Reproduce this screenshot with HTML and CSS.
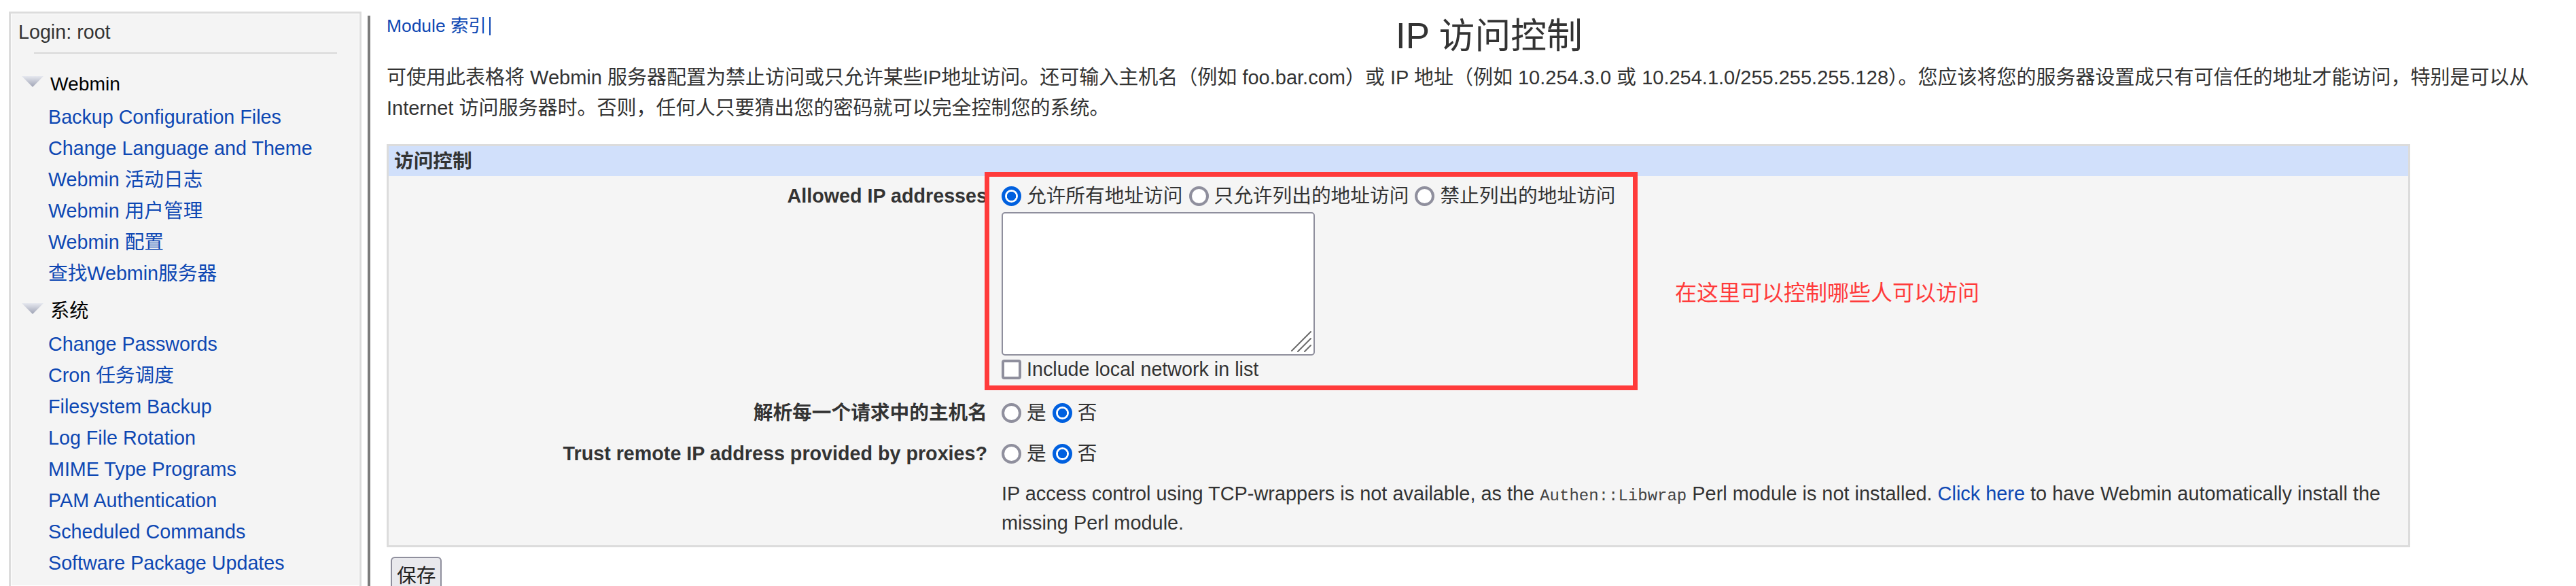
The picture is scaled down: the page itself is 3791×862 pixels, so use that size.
FILE: index.html
```html
<!DOCTYPE html>
<html lang="zh-CN">
<head>
<meta charset="utf-8">
<title>IP 访问控制</title>
<link rel="stylesheet" href="styles.css">
</head>
<body>
<div class="page">
  <aside class="side">
    <div class="panel">
      <div class="login">Login: root</div>
      <hr class="sep">
      <div class="cat">
        <svg class="tri" width="32" height="16" viewBox="0 0 32 16"><defs><linearGradient id="tg" x1="0" y1="0" x2="0" y2="1"><stop offset="0" stop-color="#e6e8ef"/><stop offset="1" stop-color="#9ea2b4"/></linearGradient></defs><polygon points="0,0 32,0 16,16" fill="url(#tg)"/></svg>
        <span>Webmin</span>
      </div>
      <ul class="links">
        <li><a href="#">Backup Configuration Files</a></li>
        <li><a href="#">Change Language and Theme</a></li>
        <li><a href="#">Webmin 活动日志</a></li>
        <li><a href="#">Webmin 用户管理</a></li>
        <li><a href="#">Webmin 配置</a></li>
        <li><a href="#">查找Webmin服务器</a></li>
      </ul>
      <div class="cat cat2">
        <svg class="tri" width="32" height="16" viewBox="0 0 32 16"><defs><linearGradient id="tg2" x1="0" y1="0" x2="0" y2="1"><stop offset="0" stop-color="#e6e8ef"/><stop offset="1" stop-color="#9ea2b4"/></linearGradient></defs><polygon points="0,0 32,0 16,16" fill="url(#tg2)"/></svg>
        <span>系统</span>
      </div>
      <ul class="links">
        <li><a href="#">Change Passwords</a></li>
        <li><a href="#">Cron 任务调度</a></li>
        <li><a href="#">Filesystem Backup</a></li>
        <li><a href="#">Log File Rotation</a></li>
        <li><a href="#">MIME Type Programs</a></li>
        <li><a href="#">PAM Authentication</a></li>
        <li><a href="#">Scheduled Commands</a></li>
        <li><a href="#">Software Package Updates</a></li>
      </ul>
    </div>
  </aside>
  <main class="main">
    <div class="topbar">
      <div class="modlinks"><a href="#">Module 索引</a><span class="caret"></span></div>
      <h1 class="title">IP 访问控制</h1>
      <div></div>
    </div>
    <p class="intro">可使用此表格将 Webmin 服务器配置为禁止访问或只允许某些IP地址访问。还可输入主机名（例如 foo.bar.com）或 IP 地址（例如 10.254.3.0 或 10.254.1.0/255.255.255.128）。您应该将您的服务器设置成只有可信任的地址才能访问，特别是可以从<br>Internet 访问服务器时。否则，任何人只要猜出您的密码就可以完全控制您的系统。</p>
    <form class="box">
      <div class="box-head">访问控制</div>
      <div class="row row1">
        <div class="lbl">Allowed IP addresses</div>
        <div class="val">
          <div class="opts">
            <label class="opt"><input type="radio" name="access" class="radio" checked>允许所有地址访问</label>
            <label class="opt"><input type="radio" name="access" class="radio">只允许列出的地址访问</label>
            <label class="opt"><input type="radio" name="access" class="radio">禁止列出的地址访问</label>
          </div>
          <div class="ta-wrap">
            <textarea class="ta"></textarea>
            <svg class="grip" width="32" height="32" viewBox="0 0 32 32"><g stroke="#6b6b6b" stroke-width="2" stroke-linecap="round"><line x1="2" y1="30" x2="30" y2="2"/><line x1="11" y1="31" x2="30" y2="12"/><line x1="21" y1="31" x2="30" y2="22"/></g></svg>
          </div>
          <label class="opt chk"><input type="checkbox" class="check">Include local network in list</label>
        </div>
      </div>
      <div class="row row2">
        <div class="lbl">解析每一个请求中的主机名</div>
        <div class="val">
          <div class="opts">
            <label class="opt"><input type="radio" name="resolve" class="radio">是</label>
            <label class="opt"><input type="radio" name="resolve" class="radio" checked>否</label>
          </div>
        </div>
      </div>
      <div class="row row3">
        <div class="lbl">Trust remote IP address provided by proxies?</div>
        <div class="val">
          <div class="opts">
            <label class="opt"><input type="radio" name="trust" class="radio">是</label>
            <label class="opt"><input type="radio" name="trust" class="radio" checked>否</label>
          </div>
        </div>
      </div>
      <div class="row row4">
        <div class="lbl"></div>
        <div class="val note">IP access control using TCP-wrappers is not available, as the <code class="mono">Authen::Libwrap</code> Perl module is not installed. <a href="#">Click here</a> to have Webmin automatically install the<br>missing Perl module.</div>
      </div>
    </form>
    <button class="save" type="button">保存</button>
  </main>
  <div class="mark"></div>
  <div class="mark-text">在这里可以控制哪些人可以访问</div>
</div>
</body>
</html>
```

FILE: styles.css
```css
html, body {
  margin: 0;
  height: 100%;
  overflow: hidden;
  background: #fff;
}
body {
  font-family: "Liberation Sans", Arial, "Noto Sans CJK SC", sans-serif;
  font-size: 28.7px;
  color: #333;
}
a {
  color: #0d47b3;
  text-decoration: none;
}
.page {
  position: relative;
  display: flex;
  height: 100vh;
}

/* left frame */
.side {
  width: 519px;
  flex: none;
  padding: 17px 9px 0 13px;
}
.panel {
  height: 100%;
  box-sizing: border-box;
  border: 3px solid #dcdcdc;
  border-bottom: 0;
  box-shadow: inset 0 0 0 1px #fff;
  background: #f4f4f4;
  padding-top: 9px;
}
.login {
  padding-left: 11px;
  line-height: 36px;
  color: #333;
}
.sep {
  border: 0;
  height: 2px;
  background: #d8d8d8;
  margin: 12px 33px 24px 34px;
}
.cat {
  display: flex;
  align-items: flex-start;
  height: 40px;
  line-height: 40px;
  color: #000;
  font-size: 28.2px;
}
.cat2 {
  margin-top: 12px;
}
.tri {
  margin: 9px 10px 0 16px;
  flex: none;
}
.links {
  list-style: none;
  margin: 6px 0 0;
  padding: 0 0 0 55px;
}
.links li {
  line-height: 46px;
  white-space: nowrap;
}

/* main frame */
.main {
  flex: 1;
  min-width: 0;
  margin-top: 23px;
  border-left: 4px solid #7c7c7c;
  padding: 0 20px 0 24px;
}
.topbar {
  display: grid;
  grid-template-columns: 1485px auto 1fr;
  align-items: start;
}
.modlinks {
  font-size: 26.4px;
  line-height: 30px;
  display: flex;
  align-items: center;
}
.caret {
  display: inline-block;
  width: 2px;
  height: 27px;
  background: #0d47b3;
  margin-left: 4px;
}
.title {
  margin: 0;
  font-size: 52.8px;
  font-weight: normal;
  line-height: 60px;
  color: #333;
  white-space: nowrap;
}
.intro {
  margin: 9px 0 0;
  font-size: 29px;
  line-height: 45px;
  white-space: nowrap;
}
.box {
  margin: 30px 0 0;
  width: 2978px;
  box-sizing: border-box;
  border: 3px solid #dcdcdc;
  background: #f5f5f5;
  padding-bottom: 1px;
}
.box-head {
  background: #d1e0fb;
  height: 44px;
  line-height: 44px;
  padding-left: 8px;
  font-weight: bold;
  color: #333;
}
.row {
  display: grid;
  grid-template-columns: 888px 1fr;
  align-items: start;
}
.row1 { padding: 11px 0 13px; }
.row2 { padding: 14px 0 12px; }
.row3 { padding: 12px 0 10px; }
.row4 { padding: 10px 0 10px; }
.lbl {
  text-align: right;
  padding-right: 7px;
  font-weight: bold;
  line-height: 36px;
  white-space: nowrap;
  color: #333;
}
.val {
  padding: 0 14px;
}
.opts {
  display: flex;
  align-items: center;
  gap: 9px;
  height: 36px;
  line-height: 36px;
  white-space: nowrap;
}
.opt {
  display: inline-flex;
  align-items: center;
  gap: 8px;
}
.radio {
  appearance: none;
  -webkit-appearance: none;
  box-sizing: border-box;
  width: 29px;
  height: 29px;
  margin: 0;
  flex: none;
  border: 4px solid #8f8f9d;
  border-radius: 50%;
  background: #fff;
}
.radio:checked {
  border: 5px solid #0060df;
  background: radial-gradient(circle, #0060df 0 6.3px, #fff 7px);
}
.ta-wrap {
  position: relative;
  width: 461px;
  height: 211px;
  margin-top: 6px;
}
.ta {
  display: block;
  box-sizing: border-box;
  width: 100%;
  height: 100%;
  margin: 0;
  border: 2px solid #8f8f9d;
  border-radius: 5px;
  background: #fff;
  resize: none;
}
.grip {
  position: absolute;
  right: 4px;
  bottom: 5px;
}
.chk {
  display: flex;
  margin-top: 1px;
  height: 38px;
  line-height: 38px;
  white-space: nowrap;
}
.check {
  appearance: none;
  -webkit-appearance: none;
  box-sizing: border-box;
  width: 29px;
  height: 29px;
  margin: 0;
  flex: none;
  border: 4px solid #8f8f9d;
  border-radius: 4px;
  background: #fff;
}
.note {
  font-size: 28.9px;
  line-height: 43px;
  white-space: nowrap;
}
.mono {
  font-family: "Liberation Mono", "DejaVu Sans Mono", monospace;
  font-size: 24px;
  line-height: 1;
  color: #444;
}
.save {
  margin: 14px 0 0 6px;
  height: 52px;
  padding: 0 7px;
  font-family: "Noto Sans CJK SC", sans-serif;
  font-size: 28.7px;
  line-height: 48px;
  color: #222;
  background: #e9e9ed;
  border: 2px solid #8f8f9d;
  border-radius: 6px;
  display: flex;
  align-items: flex-start;
}

/* annotation overlay */
.mark {
  position: absolute;
  left: 1449px;
  top: 253px;
  width: 961px;
  height: 321px;
  box-sizing: border-box;
  border: 7px solid #ff3b3b;
  pointer-events: none;
}
.mark-text {
  position: absolute;
  left: 2465px;
  top: 408px;
  font-family: "Noto Sans CJK SC", sans-serif;
  font-size: 32px;
  line-height: 40px;
  color: #ff3b3b;
  white-space: nowrap;
}
```
